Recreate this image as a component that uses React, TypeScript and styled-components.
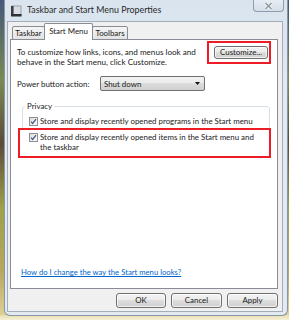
import React from "react";
import styled, { createGlobalStyle } from "styled-components";

const Global = createGlobalStyle`
  html, body { margin: 0; padding: 0; }
  body {
    width: 289px; height: 320px; overflow: hidden;
    font-family: "Segoe UI", Lato, "Open Sans", sans-serif;
  }
`;

const FS = "7.9px";

const Desktop = styled.div`
  width: 289px; height: 320px;
  display: flex; align-items: flex-start;
  background:
    linear-gradient(180deg, rgba(0,0,0,0) 0 314px, #e9e2b6 316px, #f6f1d6 320px),
    linear-gradient(180deg, #44577a 0%, #7b8a52 25%, #5b4b3a 45%, #9fa04a 65%, #b8a860 85%, #e0d59a 100%);
`;

const Window = styled.div`
  margin-left: 4px;
  width: 284px; height: 316px;
  box-sizing: border-box;
  display: flex; flex-direction: column;
  padding: 0 4px 3px 2px;
  border: 1px solid #8996a4; border-top: none;
  border-radius: 0 0 6px 6px;
  background: linear-gradient(180deg, #d9e4ef 0%, #e2e9f2 30%, #e4eaf1 100%);
`;

const TitleBar = styled.div`
  height: 21px; flex: none;
  display: flex; align-items: center;
  position: relative;
  padding-left: 3px;
  gap: 5px;
`;

const TitleText = styled.span`
  font-size: 8.9px; color: #2a2a2a; margin-top: -2px;
`;

const CloseButton = styled.div`
  position: absolute; right: -1px; top: 0;
  width: 31px; height: 12px;
  box-sizing: border-box;
  border: 1px solid #8e9cab; border-top: none;
  border-radius: 0 0 4px 4px;
  background: linear-gradient(180deg, #e6edf4, #d4dfea);
  display: flex; align-items: center; justify-content: center;
`;

const Client = styled.div`
  flex: 1;
  display: flex; flex-direction: column;
  background: #f0f0f0;
  border: 1px solid #a3aebb;
  padding: 1px 4px 0 2px;
`;

const TabRow = styled.div`
  display: flex; align-items: flex-end;
  height: 17px; padding-left: 2px;
  margin-bottom: -1px;
  position: relative; z-index: 1;
`;

const Tab = styled.div<{ $active?: boolean; $w: number }>`
  box-sizing: border-box;
  width: ${(p) => p.$w}px;
  height: ${(p) => (p.$active ? 17 : 14)}px;
  border: 1px solid #898c95;
  border-bottom: ${(p) => (p.$active ? "none" : "1px solid #898c95")};
  border-radius: 2px 2px 0 0;
  margin-left: ${(p) => (p.$active ? -1 : 0)}px;
  margin-right: ${(p) => (p.$active ? -1 : 0)}px;
  position: relative; z-index: ${(p) => (p.$active ? 2 : 1)};
  background: ${(p) => (p.$active ? "#ffffff" : "linear-gradient(180deg, #f5f5f5, #e3e3e3)")};
  font-size: ${FS}; color: #1a1a1a;
  display: flex; justify-content: center;
  padding-top: ${(p) => (p.$active ? 2 : 1)}px;
  line-height: 10px;
`;

const Panel = styled.div`
  height: 250px; box-sizing: border-box;
  background: #fff;
  border: 1px solid #898c95;
  display: flex; flex-direction: column;
`;

const TopRow = styled.div`
  display: flex; justify-content: space-between; align-items: flex-start;
  padding: 1px 6px 0 6px;
`;

const Text = styled.div`
  font-size: ${FS}; line-height: 10px; color: #1a1a1a;
`;

const Intro = styled(Text)`
  margin-top: 6px; width: 180px;
  font-size: 8.1px;
`;

const Highlight = styled.div`
  border: 2px solid #ee1c24;
  background: #fff;
`;

const CustomizeBox = styled(Highlight)`
  padding: 3px 1px 3px 5px;
`;

const Button = styled.div<{ $w: number }>`
  box-sizing: border-box;
  width: ${(p) => p.$w}px; height: 15px;
  border: 1px solid #707070; border-radius: 3px;
  background: linear-gradient(180deg, #f2f2f2 0%, #ebebeb 45%, #dddddd 50%, #cfcfcf 100%);
  box-shadow: inset 0 0 0 1px rgba(255,255,255,0.7);
  font-size: ${FS}; color: #1a1a1a; line-height: 13px;
  text-align: center;
`;

const SmallButton = styled(Button)`
  height: 13px; line-height: 11px;
`;

const PowerRow = styled.div`
  display: flex; align-items: center;
  margin-top: 9px; padding-left: 6px;
`;

const Label = styled(Text)`
  width: 83px;
`;

const Select = styled.div`
  box-sizing: border-box;
  width: 105px; height: 15px;
  border: 1px solid #707070; border-radius: 2px;
  background: linear-gradient(180deg, #f2f2f2 0%, #ebebeb 45%, #dddddd 50%, #cfcfcf 100%);
  display: flex; align-items: center; justify-content: space-between;
  padding: 0 4px 0 3px;
  font-size: ${FS}; color: #1a1a1a;
`;

const Group = styled.fieldset`
  margin: 10px 7px 0 11px;
  padding: 0;
  border: 1px solid #d5dfe5; border-radius: 3px;
  min-width: 0;
`;

const Legend = styled.legend`
  font-size: ${FS}; line-height: 10px; color: #1a1a1a;
  padding: 0 2px; margin-left: 2px;
`;

const CheckRow = styled.div`
  display: flex; align-items: flex-start; gap: 2px;
  padding: 5px 0 0 6px;
`;

const CheckHighlight = styled(Highlight)`
  margin: 2px -2px -2px -5px;
  padding: 2px 4px 4px 9px;
  display: flex; align-items: flex-start; gap: 2px;
`;

const Box = styled.span`
  flex: none; width: 9px; height: 9px; margin-top: 1px; display: flex;
`;

const Link = styled.a`
  margin-top: auto; margin-left: 10px; margin-bottom: 11px;
  font-size: 7.7px; line-height: 10px;
  color: #0066cc; text-decoration: underline;
`;

const Footer = styled.div`
  display: flex; justify-content: flex-end; gap: 5px;
  margin-top: 4px;
`;

const Check = () => (
  <Box>
    <svg width="9" height="9" viewBox="0 0 9 9">
      <defs>
        <linearGradient id="cbg" x1="0" y1="0" x2="1" y2="1">
          <stop offset="0" stopColor="#dcdcdc" />
          <stop offset="1" stopColor="#fbfbfb" />
        </linearGradient>
      </defs>
      <rect x="0.5" y="0.5" width="8" height="8" fill="url(#cbg)" stroke="#8e8f8f" />
      <path d="M2 4.6 L3.7 6.4 L7 2.2" fill="none" stroke="#4a5e8c" strokeWidth="1.3" />
    </svg>
  </Box>
);

const AppIcon = () => (
  <svg width="12" height="12" viewBox="0 0 12 12">
    <rect x="2" y="1" width="9" height="10" fill="#d8dde3" stroke="#8a929c" strokeWidth="0.8" />
    <rect x="1" y="1" width="2.6" height="10" fill="#3a3f46" />
    <rect x="1" y="9" width="10.5" height="2.4" fill="#2d3238" />
  </svg>
);

export default function App() {
  return (
    <Desktop>
      <Global />
      <Window>
        <TitleBar>
          <AppIcon />
          <TitleText>Taskbar and Start Menu Properties</TitleText>
          <CloseButton>
            <svg width="9" height="8" viewBox="0 0 9 8">
              <path d="M1.5 1 L7.5 7 M7.5 1 L1.5 7" stroke="#f4f6f8" strokeWidth="3" />
              <path d="M1.5 1 L7.5 7 M7.5 1 L1.5 7" stroke="#8c949c" strokeWidth="1.4" />
            </svg>
          </CloseButton>
        </TitleBar>
        <Client>
          <TabRow>
            <Tab $w={33}>Taskbar</Tab>
            <Tab $w={49} $active>Start Menu</Tab>
            <Tab $w={36}>Toolbars</Tab>
          </TabRow>
          <Panel>
            <TopRow>
              <Intro>
                To customize how links, icons, and menus look and behave in the Start menu, click Customize.
              </Intro>
              <CustomizeBox>
                <SmallButton $w={54}>Customize...</SmallButton>
              </CustomizeBox>
            </TopRow>
            <PowerRow>
              <Label>Power button action:</Label>
              <Select>
                <span>Shut down</span>
                <svg width="5" height="3" viewBox="0 0 5 3">
                  <path d="M0 0 H5 L2.5 3 Z" fill="#111" />
                </svg>
              </Select>
            </PowerRow>
            <Group>
              <Legend>Privacy</Legend>
              <CheckRow>
                <Check />
                <Text>Store and display recently opened programs in the Start menu</Text>
              </CheckRow>
              <CheckHighlight>
                <Check />
                <Text>Store and display recently opened items in the Start menu and the taskbar</Text>
              </CheckHighlight>
            </Group>
            <Link href="#">How do I change the way the Start menu looks?</Link>
          </Panel>
          <Footer>
            <Button $w={50}>OK</Button>
            <Button $w={51}>Cancel</Button>
            <Button $w={51}>Apply</Button>
          </Footer>
        </Client>
      </Window>
    </Desktop>
  );
}
